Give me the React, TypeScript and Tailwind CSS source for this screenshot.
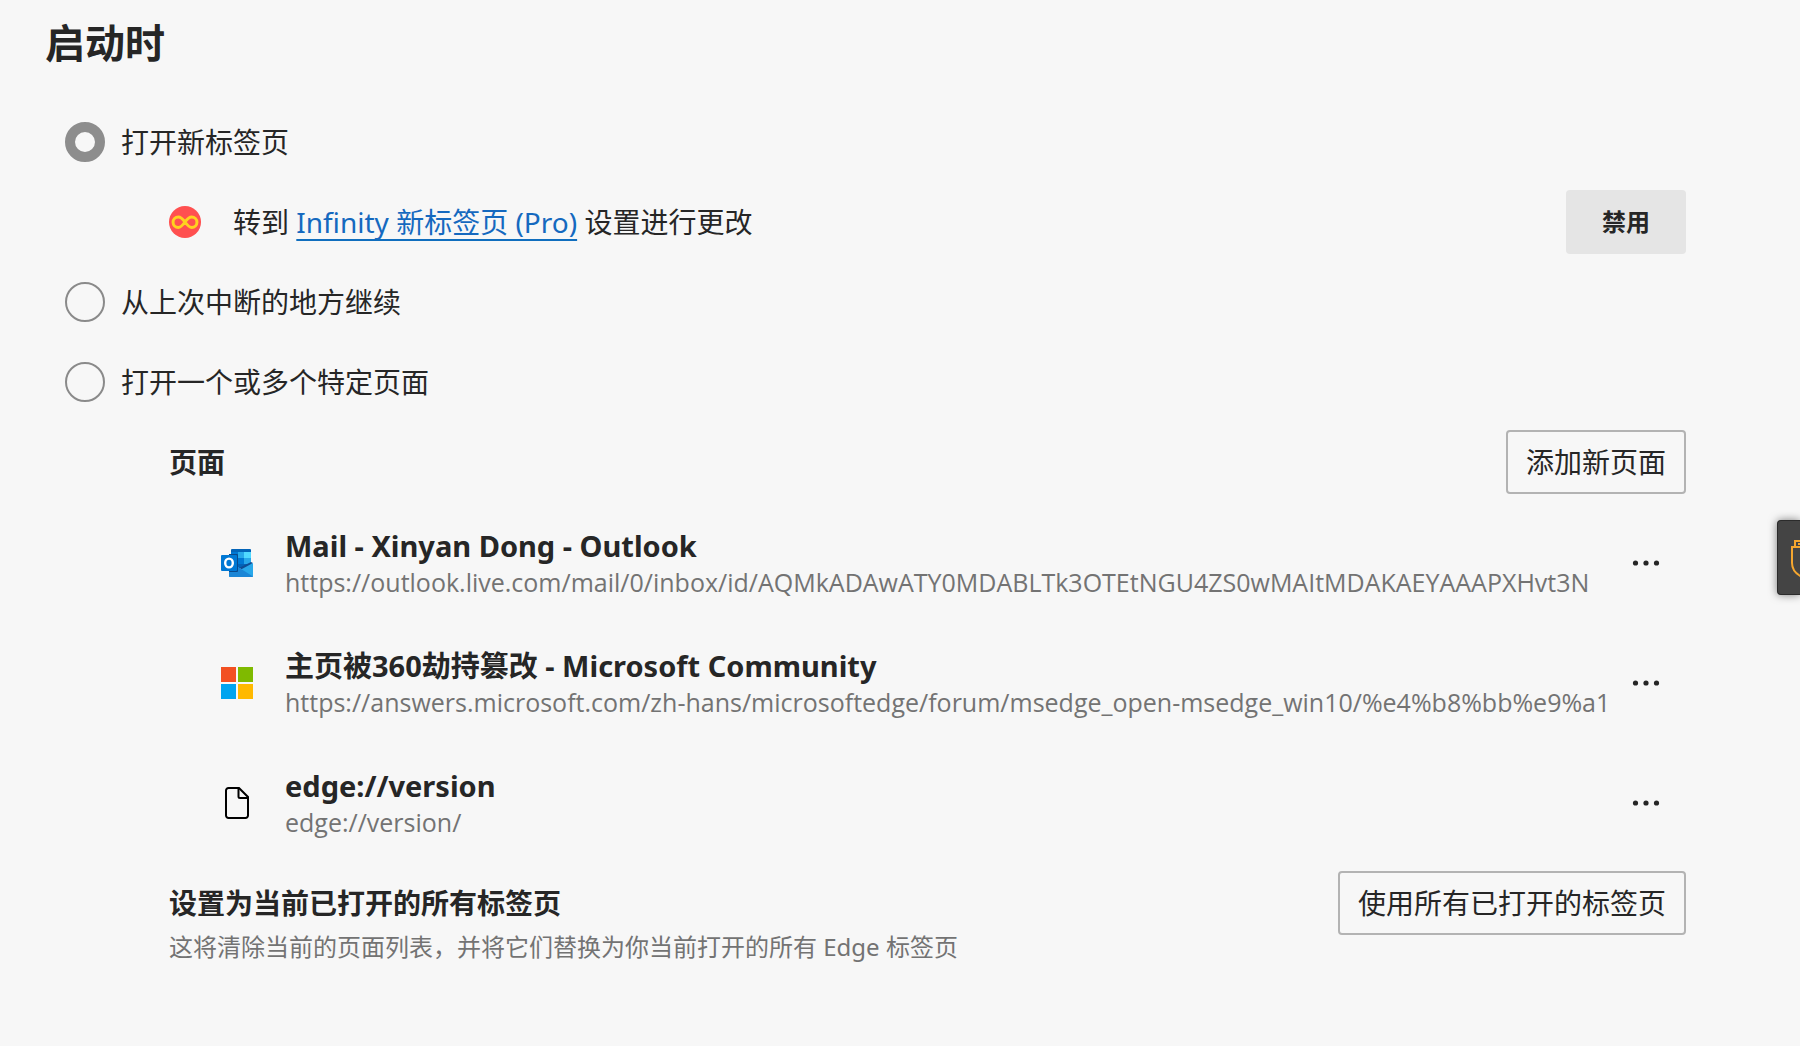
import React, { useState } from 'react';

type Page = { title: string; url: string; icon: React.ReactNode };

function InfinityIcon() {
  return (
    <svg className="size-8 shrink-0" viewBox="0 0 32 32" fill="none" aria-hidden="true">
      <circle cx="16" cy="16" r="16" fill="#ff5050" />
      <path
        d="M16 16c-2.500-3.400-4-5-6.700-5a5 5 0 0 0 0 10.500c2.700 0 4.200-2 6.700-5.500s4-5 6.700-5a5 5 0 0 1 0 10.500c-2.700 0-4.200-2-6.700-5.500z"
        stroke="#ffd21f"
        strokeWidth="3"
      />
    </svg>
  );
}

function OutlookIcon() {
  return (
    <svg className="size-8 shrink-0" viewBox="0 0 32 32" aria-hidden="true">
      <path d="M10 3a1 1 0 0 1 1-1h18a1 1 0 0 1 1 1v15H10z" fill="#0364b8" />
      <path d="M10 5h7v6h-7z" fill="#0078d4" />
      <path d="M17 5h6v6h-6z" fill="#28a8ea" />
      <path d="M23 5h7v6h-7z" fill="#50d9ff" />
      <path d="M10 11h7v6h-7z" fill="#0364b8" />
      <path d="M17 11h6v6h-6z" fill="#0078d4" />
      <path d="M23 11h7v6h-7z" fill="#28a8ea" />
      <path d="M10 17h7v5h-7z" fill="#14447d" />
      <path d="M17 17h13v4H17z" fill="#0364b8" />
      <path d="M30 15l2 1-10 7-4-2z" fill="#0f4d94" />
      <path d="M32 16v13a1 1 0 0 1-1 1H9a1 1 0 0 1-1-1V20h9l3 2.500z" fill="#28a8ea" />
      <path d="M17 20l15 9.500a1 1 0 0 1-1 .5H9a1 1 0 0 1-1-1v-9z" fill="#1b86d6" />
      <path d="M8 7h8a1 1 0 0 1 1 1v16a1 1 0 0 1-1 1H8z" fill="#0a4a8c" />
      <rect y="8" width="16" height="16" rx="1" fill="#0078d4" />
      <ellipse cx="8" cy="16" rx="3.800" ry="4.400" fill="none" stroke="#fff" strokeWidth="2.400" />
    </svg>
  );
}

function MicrosoftIcon() {
  return (
    <svg className="size-8 shrink-0" viewBox="0 0 32 32" aria-hidden="true">
      <path d="M0 0h15v15H0z" fill="#f25022" />
      <path d="M17 0h15v15H17z" fill="#7fba00" />
      <path d="M0 17h15v15H0z" fill="#00a4ef" />
      <path d="M17 17h15v15H17z" fill="#ffb900" />
    </svg>
  );
}

function FileIcon() {
  return (
    <svg className="size-8 shrink-0" viewBox="0 0 32 32" fill="none" stroke="#000" strokeWidth="2" aria-hidden="true">
      <path d="M7.500 1H18l9 9v18.500a2.500 2.500 0 0 1-2.500 2.500h-17A2.500 2.500 0 0 1 5 28.500V3.500A2.500 2.500 0 0 1 7.500 1z" />
      <path d="M17.500 1v8.500a1.500 1.500 0 0 0 1.500 1.500h8" />
    </svg>
  );
}

const options = [
  { id: 'new-tab', label: '打开新标签页' },
  { id: 'continue', label: '从上次中断的地方继续' },
  { id: 'specific', label: '打开一个或多个特定页面' },
];

const pages: Page[] = [
  {
    title: 'Mail - Xinyan Dong - Outlook',
    url: 'https://outlook.live.com/mail/0/inbox/id/AQMkADAwATY0MDABLTk3OTEtNGU4ZS0wMAItMDAKAEYAAAPXHvt3N',
    icon: <OutlookIcon />,
  },
  {
    title: '主页被360劫持篡改 - Microsoft Community',
    url: 'https://answers.microsoft.com/zh-hans/microsoftedge/forum/msedge_open-msedge_win10/%e4%b8%bb%e9%a1',
    icon: <MicrosoftIcon />,
  },
  { title: 'edge://version', url: 'edge://version/', icon: <FileIcon /> },
];

export default function App() {
  const [selected, setSelected] = useState('new-tab');

  const renderOption = (option: { id: string; label: string }) => (
    <label className="flex h-20 items-center gap-4 pl-5">
      <input
        type="radio"
        name="startup"
        value={option.id}
        checked={selected === option.id}
        onChange={() => setSelected(option.id)}
        className="size-10 shrink-0 appearance-none rounded-full border-2 border-[#8a8a8a] checked:border-10 checked:border-[#8d8d8d]"
      />
      <span>{option.label}</span>
    </label>
  );

  return (
    <main className="relative min-h-screen overflow-hidden bg-[#f7f7f7] pt-4 pr-[114px] pl-[45px] font-['Noto_Sans','Noto_Sans_CJK_SC',sans-serif] text-[28px] leading-9 text-[#262626]">
      <h1 className="mb-8 text-[40px] leading-[54px] font-bold">启动时</h1>

      {renderOption(options[0])}
      <div className="flex h-20 items-center pl-[124px]">
        <InfinityIcon />
        <p className="ml-8 flex-1">
          转到{' '}
          <a href="#infinity" className="text-[#1569bf] underline decoration-[#106ebe] decoration-2 underline-offset-[6px] [text-decoration-skip-ink:none]">
            Infinity 新标签页 (Pro)
          </a>{' '}
          设置进行更改
        </p>
        <button className="h-16 w-[120px] rounded bg-[#e5e5e5] text-2xl font-bold">禁用</button>
      </div>
      {renderOption(options[1])}
      {renderOption(options[2])}

      {/* Startup pages */}
      <section className="pl-[124px]">
        <div className="flex h-20 items-center justify-between">
          <h2 className="font-bold">页面</h2>
          <button className="h-16 rounded border-2 border-[#b3b3b3] px-[18px]">添加新页面</button>
        </div>

        <ul className="pt-px">
          {pages.map((page) => (
            <li key={page.url} className="flex h-[120px] items-center pl-[52px]">
              {page.icon}
              <div className="-mr-2 ml-8 min-w-0 flex-1 overflow-hidden pt-0.5 whitespace-nowrap">
                <div className="text-[29px] font-bold">{page.title}</div>
                <div className="font-['Open_Sans',sans-serif] text-[25px] leading-9 text-[#737373]">{page.url}</div>
              </div>
              <button aria-label="更多操作" className="flex h-16 w-20 shrink-0 items-center justify-center">
                <svg className="h-2 w-7" viewBox="0 0 28 8" fill="#262626" aria-hidden="true">
                  <circle cx="3.500" cy="4" r="2.600" />
                  <circle cx="14" cy="4" r="2.600" />
                  <circle cx="24.500" cy="4" r="2.600" />
                </svg>
              </button>
            </li>
          ))}
        </ul>

        <div className="flex items-start justify-between pt-2">
          <div className="pt-3">
            <h2 className="leading-10 font-bold">设置为当前已打开的所有标签页</h2>
            <p className="mt-1 text-2xl leading-10 text-[#737373]">
              这将清除当前的页面列表，并将它们替换为你当前打开的所有 Edge 标签页
            </p>
          </div>
          <button className="h-16 rounded border-2 border-[#b3b3b3] px-[18px]">使用所有已打开的标签页</button>
        </div>
      </section>

      {/* Docked side widget */}
      <button
        aria-label="USB"
        className="absolute top-[520px] right-0 h-[75px] w-[23px] overflow-hidden rounded-l border border-r-0 border-[#2b2b2b] bg-[#444] shadow-[0_0_8px_rgba(0,0,0,0.5)]"
      >
        <svg className="h-[73px] w-[22px]" viewBox="0 0 22 73" fill="none" stroke="#f5a62f" strokeWidth="2" aria-hidden="true">
          <path d="M17 26v-6h10" />
          <path d="M30 26H14v16c0 7 4 11 10 14" />
          <path d="M20 23h4" />
        </svg>
      </button>
    </main>
  );
}
